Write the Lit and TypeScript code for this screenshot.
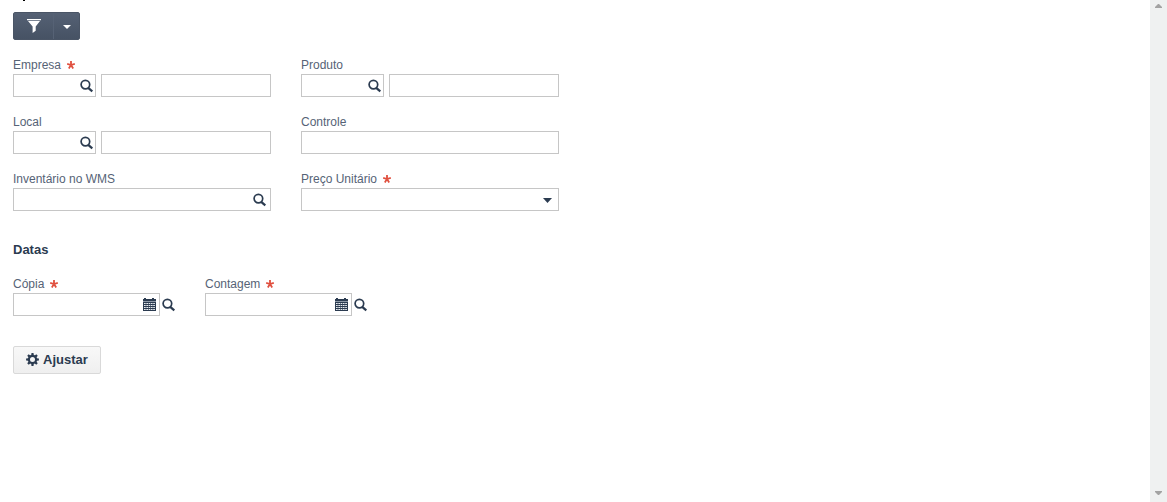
import { LitElement, html, css, svg, nothing } from "lit";
import { customElement } from "lit/decorators.js";

const searchIcon = html`<svg class="icon" viewBox="0 0 14 14" width="14" height="14" aria-hidden="true">
  <circle cx="5.4" cy="5.6" r="4.3" fill="none" stroke="#2b3b50" stroke-width="1.7"></circle>
  <path d="M8.2 8.8L12.3 12.4" fill="none" stroke="#2b3b50" stroke-width="2.2"></path>
</svg>`;

const calendarIcon = html`<svg class="icon" viewBox="0 0 14 14" width="14" height="14" aria-hidden="true">
  <path fill="#2b3b50" d="M1 1h1V0h2v1h6V0h2v1h2v2H1zM1 4h13v9H1z"></path>
  <path fill="#8c97a5" d="M1 3h13v1H1z"></path>
  ${[0, 1, 2, 3].map((r) =>
    [0, 1, 2, 3, 4].map(
      (c) => svg`<rect x=${2 + c * 2.3} y=${5 + r * 2} width="1.7" height="1" fill="#e6eaee"></rect>`
    )
  )}
</svg>`;

const gearIcon = html`<svg class="icon gear" viewBox="0 0 14 14" width="13" height="13" aria-hidden="true">
  <circle cx="7" cy="7" r="3.9" fill="none" stroke="#2b3b50" stroke-width="2.4"></circle>
  ${[0, 45, 90, 135, 180, 225, 270, 315].map(
    (a) => svg`<path d="M5.6 2.6L5.9 .1h2.2l.3 2.5z" fill="#2b3b50" transform="rotate(${a} 7 7)"></path>`
  )}
</svg>`;

@customElement("app-root")
export class AppRoot extends LitElement {
  static styles = css`
    :host {
      display: flex;
      height: 100vh;
      overflow: hidden;
      background: #fff;
      color: #566376;
      font: 12px/14px "Liberation Sans", Arial, sans-serif;
    }
    * {
      box-sizing: border-box;
    }
    .page {
      flex: 1;
      min-width: 0;
      padding: 0 13px;
      overflow: hidden;
    }
    .cut-title {
      width: 2px;
      height: 1px;
      margin: 0 0 11px 10px;
      background: #000;
    }
    button {
      margin: 0;
      padding: 0;
      border: 0;
      background: none;
      color: inherit;
      font: inherit;
      cursor: pointer;
    }
    .split {
      display: flex;
      width: 67px;
      height: 28px;
      border: 1px solid #4a5566;
      border-radius: 2px;
      background: linear-gradient(#556174, #465264);
      overflow: hidden;
    }
    .split button {
      display: flex;
      align-items: center;
      justify-content: center;
    }
    .filter {
      flex: 1;
    }
    .split .more {
      width: 26px;
      padding-top: 2px;
      border-left: 1px solid #566275;
    }
    .grid {
      display: grid;
      grid-template-columns: repeat(2, 258px);
      gap: 18px 30px;
      margin-top: 18px;
    }
    .field {
      display: flex;
      flex-direction: column;
      gap: 2px;
      min-width: 0;
    }
    .caption {
      display: flex;
      align-items: center;
      height: 14px;
      gap: 6px;
    }
    .controls {
      display: flex;
      gap: 5px;
    }
    .box {
      display: flex;
      align-items: center;
      flex: 1;
      min-width: 0;
      height: 23px;
      border: 1px solid #c6c6c6;
      background: #fff;
      padding-right: 3px;
    }
    .code {
      flex: 0 0 83px;
      padding-right: 1px;
    }
    input,
    select {
      flex: 1;
      min-width: 0;
      width: 100%;
      height: 21px;
      margin: 0;
      padding: 0 4px;
      border: 0;
      outline: 0;
      background: none;
      color: #2b3b50;
      font: inherit;
      appearance: none;
    }
    .choice {
      display: grid;
      grid-template-columns: 1fr 20px;
      padding: 0;
    }
    .choice select {
      grid-area: 1 / 1 / 2 / 3;
    }
    .choice svg {
      grid-area: 1 / 2;
      justify-self: center;
      margin: 2px 2px 0 0;
      pointer-events: none;
    }
    .icon {
      display: block;
    }
    h2 {
      margin: 31px 0 0;
      color: #2b3b50;
      font-size: 13px;
      line-height: 16px;
      font-weight: bold;
    }
    .dates {
      display: flex;
      gap: 30px;
      margin-top: 19px;
    }
    .dates .field {
      width: 162px;
    }
    .dates .controls {
      align-items: center;
      gap: 2px;
    }
    .dates .box {
      flex: 0 0 147px;
    }
    .apply {
      display: flex;
      align-items: center;
      justify-content: center;
      gap: 4px;
      width: 88px;
      height: 28px;
      margin-top: 30px;
      border: 1px solid #d9d9d9;
      border-radius: 2px;
      background: linear-gradient(#f8f8f8, #efefef);
      color: #2b3b50;
      font-size: 13px;
      font-weight: bold;
    }
    .gear {
      margin-bottom: 2px;
    }
    .scroll {
      display: flex;
      flex-direction: column;
      justify-content: space-between;
      align-items: center;
      flex: 0 0 17px;
      padding: 4px 0 7px;
      background: #eff1f1;
    }
  `;

  private caption(id: string, text: string, required = false) {
    return html`<div class="caption">
      <label for=${id}>${text}</label>
      ${required
        ? html`<svg width="8" height="8" viewBox="0 0 8 8" aria-hidden="true">
            <path d="M4 4V0M4 4L.2 2.9M4 4L7.8 2.9M4 4L1.8 7.4M4 4L6.2 7.4" stroke="#e0503f" stroke-width="1.8"></path>
          </svg>`
        : nothing}
    </div>`;
  }

  private search(text: string) {
    return html`<button type="button" aria-label="Pesquisar ${text}">${searchIcon}</button>`;
  }

  private lookup(id: string, text: string, required = false) {
    return html`<div class="field">
      ${this.caption(id, text, required)}
      <div class="controls">
        <div class="box code"><input id=${id} type="text" />${this.search(text)}</div>
        <div class="box"><input type="text" aria-label="Descrição ${text}" /></div>
      </div>
    </div>`;
  }

  private date(id: string, text: string) {
    return html`<div class="field">
      ${this.caption(id, text, true)}
      <div class="controls">
        <div class="box">
          <input id=${id} type="text" />
          <button type="button" aria-label="Calendário ${text}">${calendarIcon}</button>
        </div>
        ${this.search(text)}
      </div>
    </div>`;
  }

  render() {
    return html`
      <main class="page">
        <div class="cut-title"></div>
        <div class="split">
          <button class="filter" type="button" aria-label="Filtrar">
            <svg width="14" height="14" viewBox="0 0 14 14" aria-hidden="true">
              <path fill="#fff" d="M0 0h14v1.3H0zM1 2h12L8.7 7.4v4.4L5.6 14V7.4z"></path>
            </svg>
          </button>
          <button class="more" type="button" aria-label="Mais opções">
            <svg width="8" height="4" viewBox="0 0 8 4" aria-hidden="true">
              <path fill="#fff" d="M0 0h8L4 4z"></path>
            </svg>
          </button>
        </div>
        <div class="grid">
          ${this.lookup("empresa", "Empresa", true)} ${this.lookup("produto", "Produto")}
          ${this.lookup("local", "Local")}
          <div class="field">
            ${this.caption("controle", "Controle")}
            <div class="controls"><div class="box"><input id="controle" type="text" /></div></div>
          </div>
          <div class="field">
            ${this.caption("inventario", "Inventário no WMS")}
            <div class="controls">
              <div class="box"><input id="inventario" type="text" />${this.search("Inventário")}</div>
            </div>
          </div>
          <div class="field">
            ${this.caption("preco", "Preço Unitário", true)}
            <div class="controls">
              <div class="box choice">
                <select id="preco"><option></option></select>
                <svg width="9" height="5" viewBox="0 0 9 5" aria-hidden="true">
                  <path fill="#2b3b50" d="M0 0h9L4.5 5z"></path>
                </svg>
              </div>
            </div>
          </div>
        </div>
        <h2>Datas</h2>
        <div class="dates">${this.date("copia", "Cópia")} ${this.date("contagem", "Contagem")}</div>
        <button class="apply" type="button">${gearIcon}<span>Ajustar</span></button>
      </main>
      <div class="scroll" aria-hidden="true">
        <svg width="7" height="4" viewBox="0 0 7 4"><path fill="#a3a3a3" d="M0 4V3L3 0h1L7 3v1z"></path></svg>
        <svg width="7" height="4" viewBox="0 0 7 4"><path fill="#a3a3a3" d="M0 0v1L3 4h1L7 1V0z"></path></svg>
      </div>
    `;
  }
}
